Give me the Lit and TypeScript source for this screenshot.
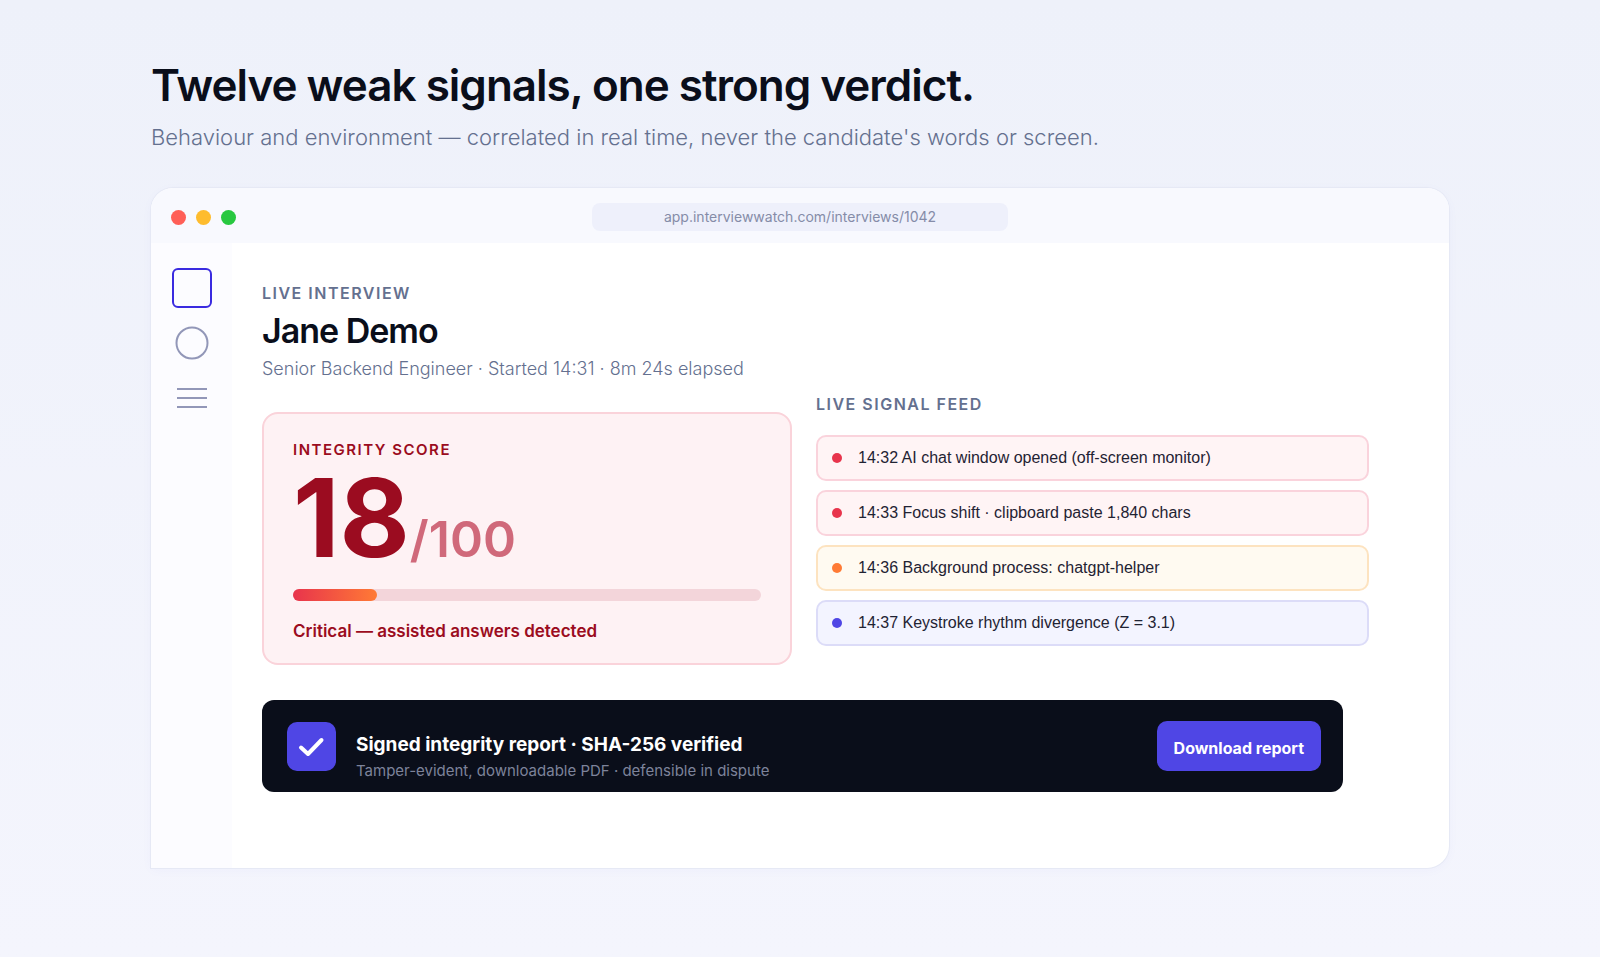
import { LitElement, html, css, svg } from "lit";
import { customElement, state } from "lit/decorators.js";

type Tone = "critical" | "warning" | "info";
interface Signal {
  tone: Tone;
  time: string;
  text: string;
}

@customElement("app-root")
export class AppRoot extends LitElement {
  @state() private score = 18;

  private signals: Signal[] = [
    { tone: "critical", time: "14:32", text: "AI chat window opened (off-screen monitor)" },
    { tone: "critical", time: "14:33", text: "Focus shift · clipboard paste 1,840 chars" },
    { tone: "warning", time: "14:36", text: "Background process: chatgpt-helper" },
    { tone: "info", time: "14:37", text: "Keystroke rhythm divergence (Z = 3.1)" },
  ];

  static styles = css`
    :host {
      display: block;
      box-sizing: border-box;
      min-height: 100vh;
      padding: 58px 151px 87px;
      background: linear-gradient(180deg, #eef1fa 0%, #f4f5fd 100%);
      font-family: Inter, "Liberation Sans", sans-serif;
      color: #0a0e1a;
    }
    *,
    *::before {
      box-sizing: border-box;
    }
    h1,
    h2,
    h3,
    p,
    ul {
      margin: 0;
      padding: 0;
    }
    .title {
      font-size: 44px;
      line-height: 54px;
      font-weight: 600;
      letter-spacing: -1px;
    }
    .subtitle {
      margin-top: 10px;
      font-size: 22px;
      line-height: 30px;
      font-weight: 300;
      color: #64708f;
    }
    .window {
      display: grid;
      grid-template-columns: 81px 1fr;
      grid-template-rows: 55px auto;
      margin-top: 36px;
      border-radius: 22px 22px 22px 0;
      background: #fff;
      box-shadow: 0 0 0 1px #e6e9f5, 0 2px 12px rgba(79, 70, 229, 0.03);
    }
    .chrome {
      grid-column: 1 / -1;
      display: grid;
      grid-template-columns: 1fr 416px 1fr;
      align-items: center;
      padding: 3px 20px 0;
      border-radius: 22px 22px 0 0;
      background: #f8f9fe;
    }
    .lights {
      display: flex;
      gap: 10px;
    }
    .light {
      width: 15px;
      height: 15px;
      border-radius: 50%;
    }
    .close {
      background: #ff5f57;
    }
    .minimize {
      background: #febc2e;
    }
    .expand {
      background: #28c840;
    }
    .address {
      height: 28px;
      padding: 0;
      border: 0;
      border-radius: 8px;
      background: #eef0fb;
      font: 400 14px/28px Inter, sans-serif;
      color: #858ca8;
      text-align: center;
    }
    .rail {
      display: flex;
      flex-direction: column;
      align-items: center;
      gap: 13px;
      padding: 24px 0 0 1px;
      background: #fcfcff;
    }
    .rail-link {
      display: block;
      width: 42px;
      height: 42px;
      color: #9297b8;
    }
    .rail-link.active {
      color: #3a2be0;
    }
    .rail-link svg {
      display: block;
    }
    .content {
      padding: 40px 80px 76px 30px;
    }
    .eyebrow {
      font-size: 16px;
      line-height: 20px;
      font-weight: 600;
      letter-spacing: 1.5px;
      text-transform: uppercase;
      color: #64708f;
    }
    .name {
      margin-top: 8px;
      font-size: 34px;
      line-height: 40px;
      font-weight: 600;
      letter-spacing: -1px;
    }
    .meta {
      margin-top: 6px;
      font-size: 18px;
      line-height: 24px;
      font-weight: 300;
      color: #64708f;
    }
    .columns {
      display: grid;
      grid-template-columns: 530fr 553fr;
      gap: 24px;
      margin-top: 13px;
    }
    .score-card {
      margin-top: 18px;
      padding: 26px 29px 20px;
      border: 2px solid #fad3da;
      border-radius: 16px;
      background: #fef2f4;
      color: #9b0c20;
    }
    .score-card .eyebrow {
      color: inherit;
      font-size: 15px;
    }
    .score {
      margin-top: 12px;
      font-size: 108px;
      line-height: 92px;
      font-weight: 700;
    }
    .total {
      font-size: 50px;
      line-height: 50px;
      color: #d0697a;
      font-weight: 600;
    }
    .track {
      height: 12px;
      margin-top: 25px;
      border-radius: 6px;
      background: #f3d5da;
    }
    .fill {
      height: 100%;
      border-radius: 6px;
      background: linear-gradient(90deg, #e8344c, #ff7a35);
    }
    .verdict {
      margin-top: 18px;
      font-size: 17px;
      line-height: 24px;
      font-weight: 600;
    }
    .signals {
      display: grid;
      gap: 9px;
      margin-top: 21px;
      list-style: none;
    }
    .signal {
      display: flex;
      align-items: center;
      gap: 16px;
      height: 46px;
      padding: 0 14px;
      border: 2px solid var(--edge);
      border-radius: 10px;
      background: var(--tint);
      font-family: "Liberation Sans", Arial, sans-serif;
      font-size: 16px;
      line-height: 20px;
      color: #1f2333;
    }
    .signal::before {
      content: "";
      width: 10px;
      height: 10px;
      border-radius: 50%;
      background: var(--dot);
    }
    .critical {
      --edge: #fad3dc;
      --tint: #fff4f5;
      --dot: #e8344c;
    }
    .warning {
      --edge: #fde3c0;
      --tint: #fffaf1;
      --dot: #ff7a35;
    }
    .info {
      --edge: #dcdcf8;
      --tint: #f3f4ff;
      --dot: #4f46e5;
    }
    .report {
      display: flex;
      align-items: center;
      margin: 35px 26px 0 0;
      min-height: 92px;
      padding: 0 22px 0 25px;
      border-radius: 12px;
      background: #0a0e1a;
    }
    .report-text {
      flex: 1;
      margin-left: 20px;
      padding-top: 23px;
    }
    .report-title {
      font-size: 19px;
      line-height: 26px;
      font-weight: 700;
      color: #fff;
    }
    .report-note {
      font-size: 15px;
      line-height: 26px;
      font-weight: 400;
      color: #7d839a;
    }
    .download {
      height: 50px;
      padding: 4px 17px 0;
      border: 0;
      border-radius: 10px;
      background: #4f46e5;
      font: 700 16px/24px Inter, sans-serif;
      color: #fff;
    }
  `;

  private railIcon(shape: unknown, label: string, active = false) {
    return html`<a class="rail-link ${active ? "active" : ""}" href="#" aria-label=${label}>
      <svg width="42" height="42" viewBox="0 0 42 42" fill="none" stroke="currentColor" stroke-width="2">${shape}</svg>
    </a>`;
  }

  render() {
    return html`
      <h1 class="title">Twelve weak signals, one strong verdict.</h1>
      <p class="subtitle">Behaviour and environment — correlated in real time, never the candidate's words or screen.</p>

      <main class="window">
        <div class="chrome">
          <div class="lights">
            <span class="light close"></span><span class="light minimize"></span><span class="light expand"></span>
          </div>
          <input class="address" aria-label="Address" readonly value="app.interviewwatch.com/interviews/1042" />
        </div>

        <nav class="rail" aria-label="Sections">
          ${this.railIcon(svg`<rect x="2" y="2" width="38" height="38" rx="5" />`, "Overview", true)}
          ${this.railIcon(svg`<circle cx="21" cy="21" r="15.5" />`, "People")}
          ${this.railIcon(svg`<path d="M6 12H36M6 21H36M6 30H36" />`, "Menu")}
        </nav>

        <div class="content">
          <p class="eyebrow">Live interview</p>
          <h2 class="name">Jane Demo</h2>
          <p class="meta">Senior Backend Engineer · Started 14:31 · 8m 24s elapsed</p>

          <div class="columns">
            <section class="score-card">
              <h3 class="eyebrow">Integrity score</h3>
              <p class="score">${this.score}<span class="total">/100</span></p>
              <div class="track"><div class="fill" style="width:${this.score}%"></div></div>
              <p class="verdict">Critical — assisted answers detected</p>
            </section>

            <section>
              <h3 class="eyebrow">Live signal feed</h3>
              <ul class="signals">
                ${this.signals.map((s) => html`<li class="signal ${s.tone}">${s.time} ${s.text}</li>`)}
              </ul>
            </section>
          </div>

          <section class="report">
            <svg width="49" height="49" viewBox="0 0 49 49" fill="none" aria-hidden="true">
              <rect width="49" height="49" rx="10" fill="#4f46e5" />
              <path d="M14 25.500L21 32L34.500 18" stroke="#fff" stroke-width="4" stroke-linecap="round" stroke-linejoin="round" />
            </svg>
            <div class="report-text">
              <h3 class="report-title">Signed integrity report · SHA-256 verified</h3>
              <p class="report-note">Tamper-evident, downloadable PDF · defensible in dispute</p>
            </div>
            <button class="download" type="button">Download report</button>
          </section>
        </div>
      </main>
    `;
  }
}
